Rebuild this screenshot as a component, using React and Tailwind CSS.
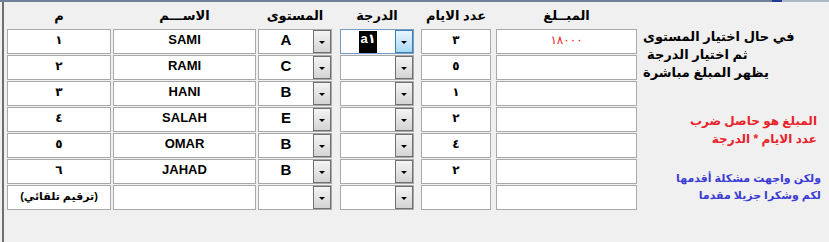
import React from "react";

const rows = [
  { n: "١", name: "SAMI", lvl: "A", grade: "a١", days: "٣", amt: "١٨٠٠٠", active: true },
  { n: "٢", name: "RAMI", lvl: "C", days: "٥" },
  { n: "٣", name: "HANI", lvl: "B", days: "١" },
  { n: "٤", name: "SALAH", lvl: "E", days: "٢" },
  { n: "٥", name: "OMAR", lvl: "B", days: "٤" },
  { n: "٦", name: "JAHAD", lvl: "B", days: "٢" },
  { n: "(ترقيم تلقائي)", name: "", lvl: "", days: "", auto: true },
];

const font = { fontFamily: '"Liberation Sans", "DejaVu Sans", sans-serif' };

function Arrow({ active }) {
  return (
    <div
      className={
        "h-full w-[18px] flex items-center justify-center border " +
        (active
          ? "border-[#3c7fb1] bg-gradient-to-b from-[#eaf6fd] to-[#a7d9f5]"
          : "border-[#707070] bg-gradient-to-b from-[#f4f4f4] to-[#d4d4d4]")
      }
    >
      <div className="w-0 h-0 mt-[2px] border-l-[3px] border-r-[3px] border-t-[3px] border-l-transparent border-r-transparent border-t-black" />
    </div>
  );
}

function Cell({ w, ml, children, className = "" }) {
  return (
    <div
      className={`${w} ${ml} h-[25px] border border-[#a9a9a9] bg-white flex justify-center pt-[2px] leading-[16px] ${className}`}
    >
      {children}
    </div>
  );
}

function Combo({ ml, value, active, big }) {
  return (
    <div
      className={`w-[74px] ${ml} h-[25px] border ${
        active ? "border-[#7a9cc4]" : "border-[#a9a9a9]"
      } bg-white flex`}
    >
      <div className="flex-1 flex justify-center pt-[2px] leading-[16px]">
        {big ? (
          <span className="text-[15px] font-bold text-black">{value}</span>
        ) : value ? (
          <span className="bg-black text-white text-[13px] font-bold leading-[15px] px-[1px] mt-[-1px]">
            {value}
          </span>
        ) : null}
      </div>
      <Arrow active={active} />
    </div>
  );
}

export default function App() {
  return (
    <div className="w-[829px] h-[242px] bg-[#f0f0f0] overflow-hidden flex flex-col" style={font}>
      <div className="h-[2px] flex shrink-0">
        <div className="w-[772px] bg-[#6f8099]" />
        <div className="w-[10px] bg-[#1f3f94]" />
        <div className="flex-1 bg-[#aeb8c7]" />
      </div>
      <div className="flex-1 flex ml-[2px] border-l-2 border-[#6e6e6e]">
        <div className="pl-[3px] flex flex-col">
          <div className="h-[27px] flex items-center text-[13px] font-bold text-black">
            <div className="w-[104px] ml-0 text-center">م</div>
            <div className="w-[143px] ml-[2px] text-center">الاســـم</div>
            <div className="w-[74px] ml-[2px] text-center">المستوى</div>
            <div className="w-[74px] ml-[8px] text-center">الدرجة</div>
            <div className="w-[70px] ml-[7px] text-center">عدد الايام</div>
            <div className="w-[141px] ml-[5px] text-center">المبــلغ</div>
          </div>
          <div className="flex flex-col gap-[1px]">
            {rows.map((r, i) => (
              <div key={i} className="flex">
                <Cell w="w-[104px]" ml="ml-0">
                  <span dir="rtl" className={r.auto ? "text-[11px] font-bold" : "text-[12px] font-bold"}>
                    {r.n}
                  </span>
                </Cell>
                <Cell w="w-[143px]" ml="ml-[2px]">
                  <span className="text-[13px] font-bold">{r.name}</span>
                </Cell>
                <Combo ml="ml-[2px]" value={r.lvl} big />
                <Combo ml="ml-[8px]" value={r.grade} active={r.active} />
                <Cell w="w-[70px]" ml="ml-[7px]">
                  <span className="text-[12px] font-bold">{r.days}</span>
                </Cell>
                <Cell w="w-[141px]" ml="ml-[5px]">
                  <span className="text-[12px] text-[#f01c24] tracking-[1px]">{r.amt || ""}</span>
                </Cell>
              </div>
            ))}
          </div>
        </div>
        <div className="flex-1 flex flex-col font-bold">
          <div className="mt-[26px] pl-[6px] leading-[18px] text-[13px] text-black text-left">
            <div dir="rtl" className="text-left">في حال اختيار المستوى</div>
            <div dir="rtl" className="text-left pl-[4px]">ثم اختيار الدرجة</div>
            <div dir="rtl" className="text-left">يظهر المبلغ مباشرة</div>
          </div>
          <div dir="rtl" className="mt-[30px] pr-[12px] leading-[18px] text-[12px] text-[#e8232b] text-right">
            <div>المبلغ هو حاصل ضرب</div>
            <div>عدد الايام * الدرجة</div>
          </div>
          <div dir="rtl" className="mt-[22px] pr-[8px] leading-[17px] text-[11px] text-[#3b3bd4] text-right">
            <div>ولكن واجهت مشكلة أقدمها</div>
            <div>لكم وشكرا جزيلا مقدما</div>
          </div>
        </div>
      </div>
    </div>
  );
}
